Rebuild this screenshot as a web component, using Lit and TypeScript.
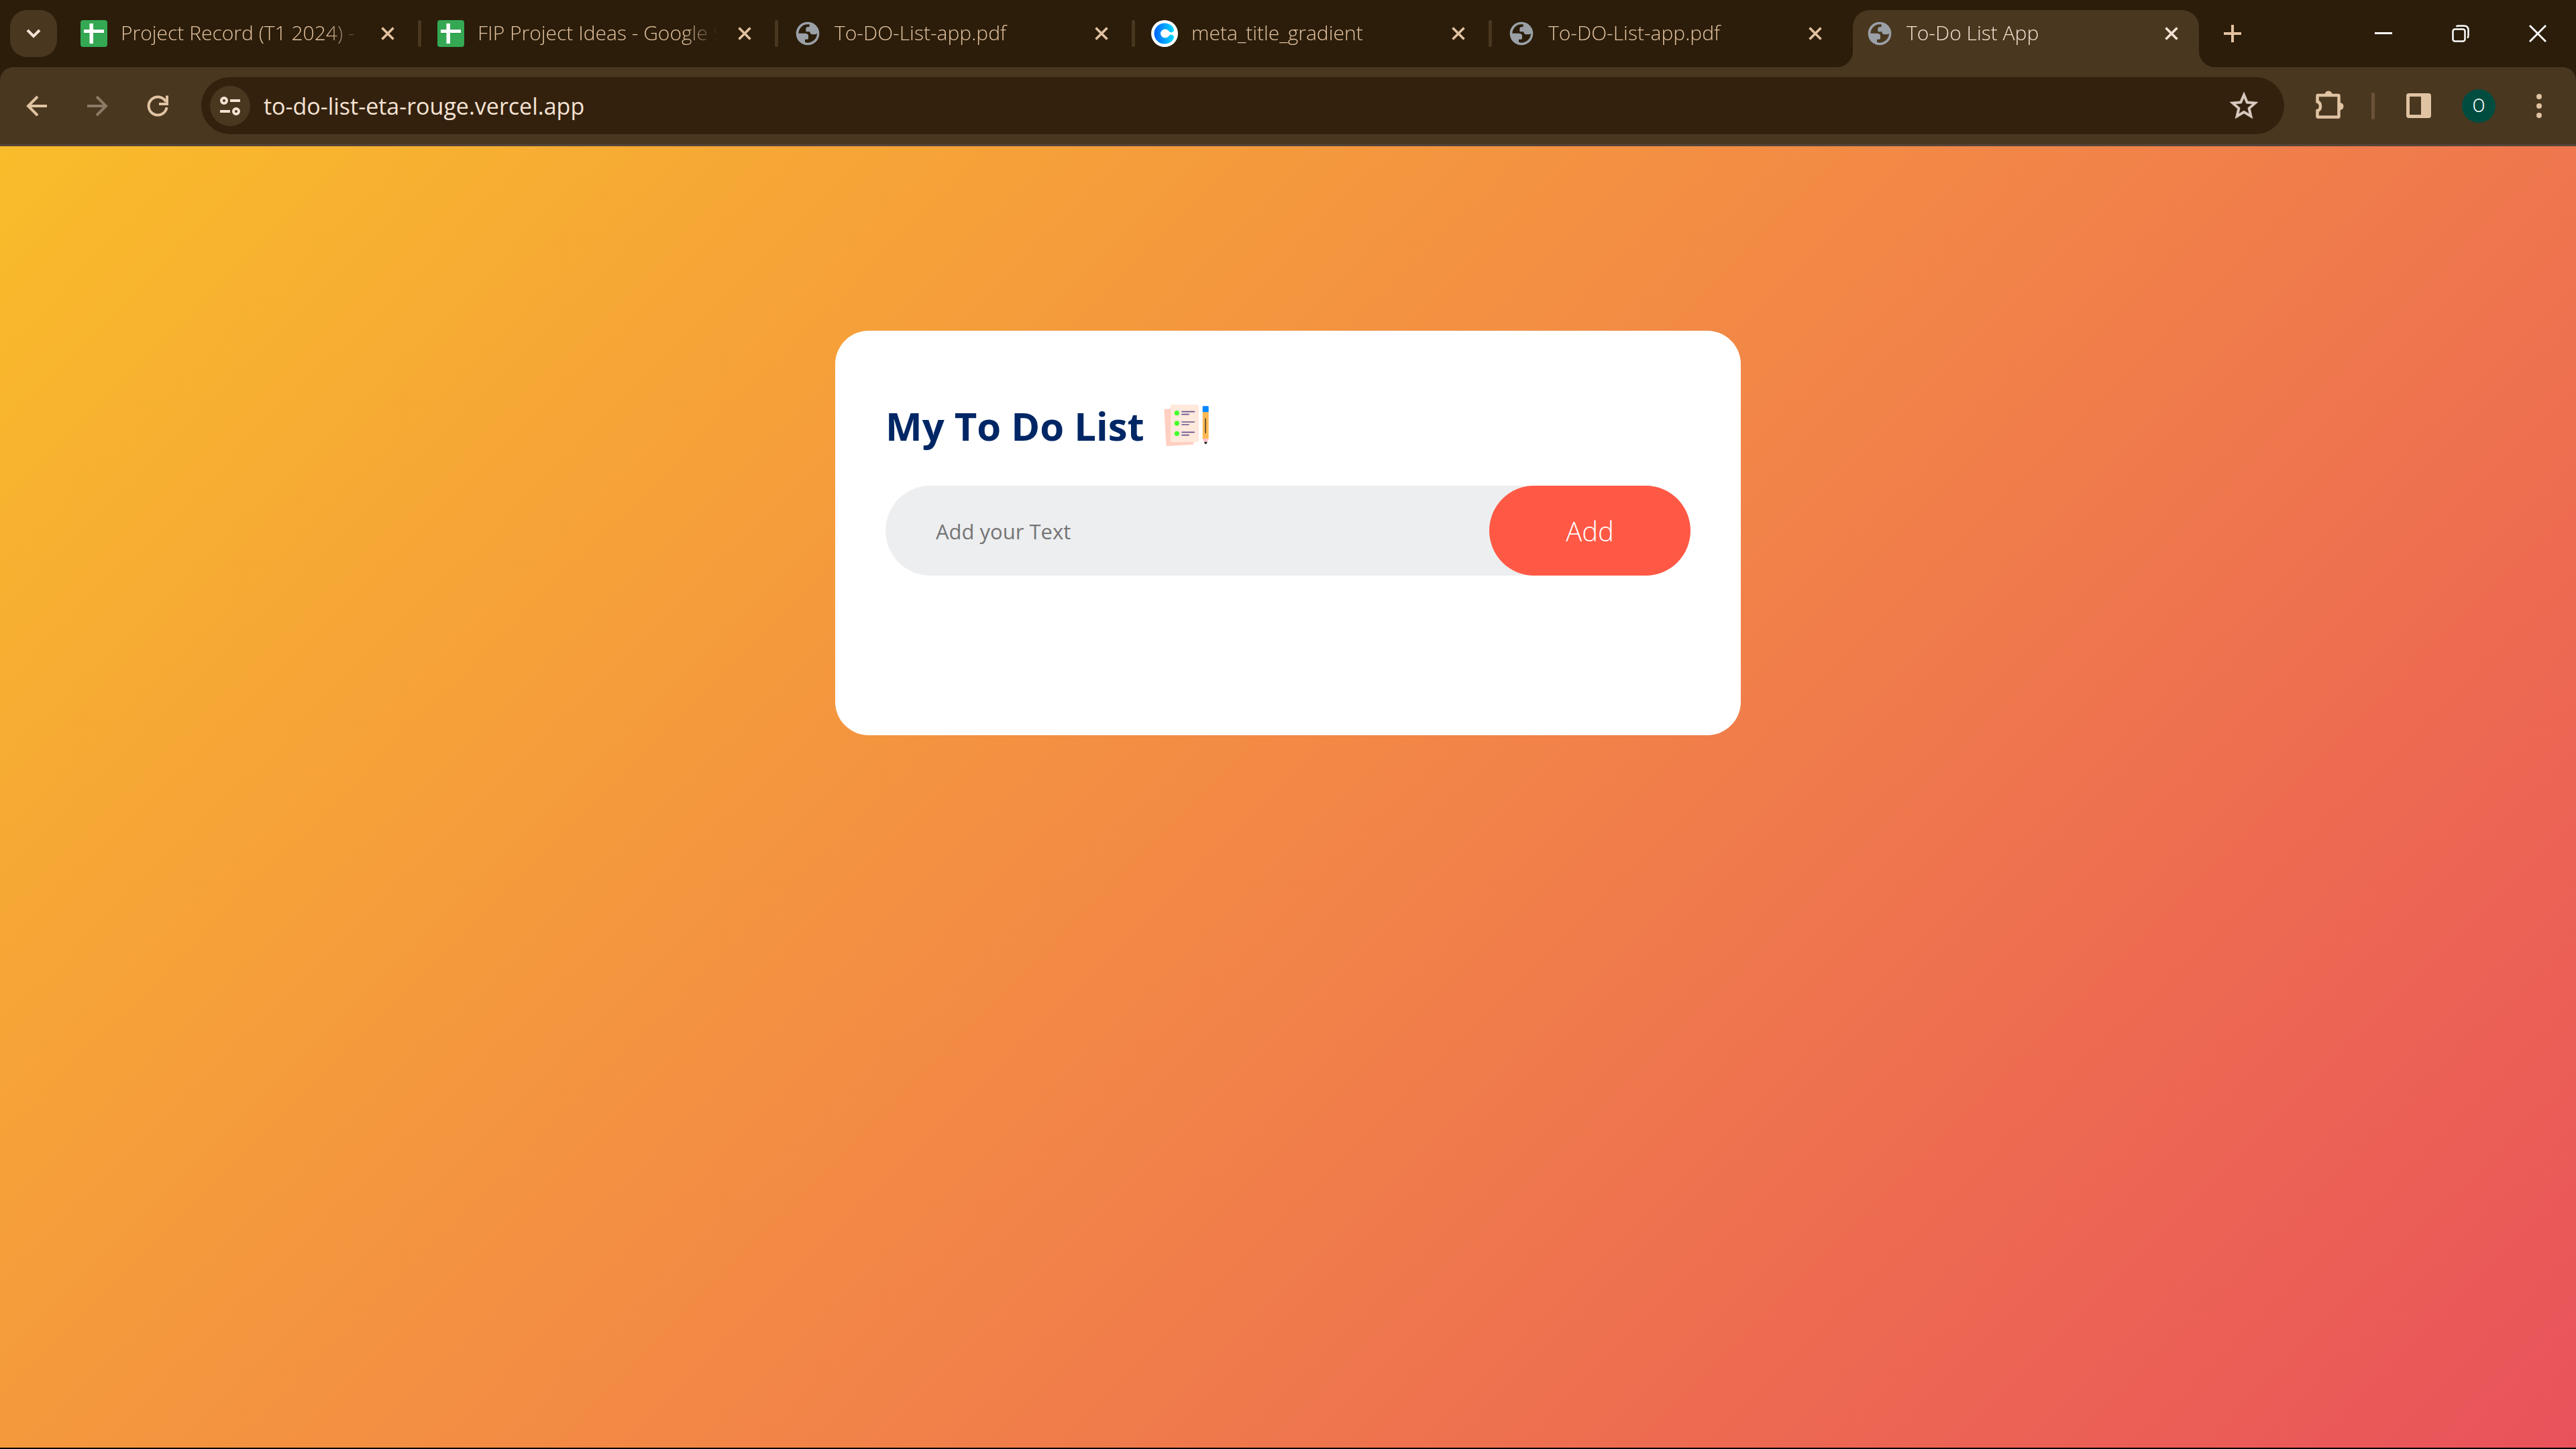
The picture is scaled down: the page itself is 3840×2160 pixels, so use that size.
import { LitElement, html, css, svg, nothing, type TemplateResult } from "lit";
import { customElement, property, state } from "lit/decorators.js";

const sheetIcon = svg`
  <svg viewBox="0 0 40 40" width="40" height="40" aria-hidden="true">
    <rect width="40" height="40" rx="4" fill="#34a853" />
    <path d="M5 13h30v7H5z" fill="#188038" opacity=".35" />
    <path d="M13.5 5h5.5v9h16v5H19v16h-5.5V19H5v-5h8.5z" fill="#fff" />
  </svg>`;

const globeIcon = svg`
  <svg viewBox="0 0 40 40" width="40" height="40" aria-hidden="true">
    <g transform="translate(-15 -15) scale(.3333)">
      <path fill="#9aa0a6" fill-rule="evenodd" d="M105 53a52 52 0 1 0 0 104a52 52 0 1 0 0-104z
        M113 64A42 42 0 0 0 64 104H92Q108 105 108 114V127Q108 131 104 131H93V143
        Q99 146 107 146A42 42 0 0 0 147 104Q143 109 136 109H128Q115 109 115 97H100Q97 97 97 94V83Q97 76 104 76H108Q113 76 113 71Z" />
    </g>
  </svg>`;

const canvaIcon = svg`
  <svg viewBox="0 0 40 40" width="40" height="40" aria-hidden="true">
    <defs>
      <linearGradient id="c-fill" x1="0" x2="1" y1="0" y2="0">
        <stop offset="0" stop-color="#0061ff" />
        <stop offset="1" stop-color="#00dcff" />
      </linearGradient>
    </defs>
    <circle cx="20" cy="20" r="20" fill="#fff" />
    <path fill="url(#c-fill)" d="M20 4.500C27 4.500 33 9 34 14C34.600 17.500 30 19.500 27.500 17.500C26 15.500 24 13.500 20.500 13.500A6.500 6.500 0 0 0 20.500 26.500C24 26.500 26 24.500 27.500 22.500C30 20.500 34.600 22.500 34 26C33 31 27 35.500 20 35.500A15.500 15.500 0 0 1 20 4.500Z" />
  </svg>`;

const closeIcon = svg`
  <svg viewBox="0 0 20 20" width="20" height="20" aria-hidden="true">
    <path d="M1.500 1.500l17 17M18.500 1.500l-17 17" stroke="currentColor" stroke-width="3.600" />
  </svg>`;

interface TabInfo {
  title: string;
  icon: TemplateResult | unknown;
  active?: boolean;
}

const TABS: TabInfo[] = [
  { title: "Project Record (T1 2024) - G", icon: sheetIcon },
  { title: "FIP Project Ideas - Google S", icon: sheetIcon },
  { title: "To-DO-List-app.pdf", icon: globeIcon },
  { title: "meta_title_gradient", icon: canvaIcon },
  { title: "To-DO-List-app.pdf", icon: globeIcon },
  { title: "To-Do List App", icon: globeIcon, active: true },
];

const resetButton = css`
  button {
    display: flex;
    align-items: center;
    justify-content: center;
    flex: none;
    margin: 0;
    padding: 0;
    border: 0;
    background: none;
    color: inherit;
    font: inherit;
    cursor: pointer;
  }
  svg {
    display: block;
    flex: none;
  }
`;

@customElement("tab-strip")
class TabStrip extends LitElement {
  static styles = [
    resetButton,
    css`
      :host {
        display: block;
        background: #2b1d0a;
        color: #e3c2a0;
      }
      .strip {
        display: flex;
        align-items: center;
        height: 100px;
        padding-left: 15px;
      }
      .search {
        width: 70px;
        height: 70px;
        margin-right: 11px;
        border-radius: 25px;
        background: #493720;
        color: #f5e2d3;
      }
      .tabs {
        display: flex;
        flex: 0 1 auto;
        min-width: 0;
        align-self: stretch;
      }
      .tab {
        display: flex;
        align-items: center;
        flex: 0 1 auto;
        width: 532px;
        min-width: 0;
        box-sizing: border-box;
        padding-left: 24px;
        gap: 20px;
      }
      .title {
        flex: 1;
        min-width: 0;
        margin-bottom: 2px;
        overflow: hidden;
        white-space: nowrap;
        font-size: 30px;
        line-height: 40px;
        mask-image: linear-gradient(to left, transparent, #000 50px);
      }
      .close {
        width: 40px;
        height: 40px;
        border-radius: 20px;
      }
      .divider {
        flex: none;
        width: 5px;
        height: 40px;
        border-radius: 2px;
        margin-left: 5px;
        background: #493720;
      }
      .last .divider {
        visibility: hidden;
      }
      .active {
        position: relative;
        width: 516px;
        align-self: flex-end;
        height: 85px;
        margin-left: 6px;
        padding: 0 21px 15px 20px;
        border-radius: 25px 25px 0 0;
        background: #493720;
        color: #f5e2d3;
      }
      .active::before,
      .active::after {
        content: "";
        position: absolute;
        bottom: 0;
        width: 25px;
        height: 25px;
      }
      .active::before {
        right: 100%;
        background: radial-gradient(circle at 0 0, transparent 25px, #493720 26px);
      }
      .active::after {
        left: 100%;
        background: radial-gradient(circle at 100% 0, transparent 25px, #493720 26px);
      }
      .new {
        width: 70px;
        height: 70px;
        margin-left: 15px;
      }
      .window {
        display: flex;
        align-self: stretch;
        margin-left: auto;
        color: #fff;
      }
      .window button {
        width: 115px;
      }
    `,
  ];

  render() {
    return html`
      <div class="strip">
        <button class="search" aria-label="Search tabs">
          <svg viewBox="0 0 22 14" width="22" height="14" aria-hidden="true">
            <path d="M2 2l9 9 9-9" fill="none" stroke="currentColor" stroke-width="4" />
          </svg>
        </button>
        <div class="tabs" role="tablist">
          ${TABS.map(
            (t, i) => html`
              <div
                class="tab ${t.active ? "active" : ""} ${TABS[i + 1]?.active ? "last" : ""}"
                role="tab"
                aria-selected=${t.active ? "true" : "false"}
              >
                ${t.icon}
                <span class="title">${t.title}</span>
                <button class="close" aria-label="Close tab">${closeIcon}</button>
                ${t.active ? nothing : html`<span class="divider"></span>`}
              </div>
            `
          )}
        </div>
        <button class="new" aria-label="New tab">
          <svg viewBox="0 0 26 26" width="26" height="26" aria-hidden="true">
            <path d="M13 0v26M0 13h26" stroke="currentColor" stroke-width="4" />
          </svg>
        </button>
        <div class="window">
          <button aria-label="Minimize">
            <svg viewBox="0 0 26 26" width="26" height="26" aria-hidden="true">
              <path d="M0 12.500h26" stroke="currentColor" stroke-width="3" />
            </svg>
          </button>
          <button aria-label="Restore">
            <svg viewBox="0 0 26 26" width="26" height="26" fill="none" stroke="currentColor" stroke-width="2.500" aria-hidden="true">
              <rect x="1.500" y="6.500" width="18" height="18" rx="3" />
              <path d="M6.500 2.500Q7.500 1.500 10 1.500H18Q24.500 1.500 24.500 8V16Q24.500 18.500 23 19.500" />
            </svg>
          </button>
          <button aria-label="Close window">
            <svg viewBox="0 0 26 26" width="26" height="26" aria-hidden="true">
              <path d="M1 1l24 24M25 1L1 25" stroke="currentColor" stroke-width="2.800" />
            </svg>
          </button>
        </div>
      </div>
    `;
  }
}

@customElement("nav-bar")
class NavBar extends LitElement {
  static styles = [
    resetButton,
    css`
      :host {
        display: block;
        background: #2b1d0a;
        color: #e0c3a2;
      }
      .bar {
        display: flex;
        align-items: center;
        box-sizing: border-box;
        height: 118px;
        padding: 0 10px;
        border-bottom: 3px solid #54443a;
        border-radius: 20px 20px 0 0;
        background: #493720;
      }
      .tool {
        width: 90px;
        height: 85px;
      }
      .dim {
        color: #8d7965;
      }
      .address {
        display: flex;
        align-items: center;
        flex: 1;
        min-width: 0;
        height: 85px;
        margin: 0 23px 0 20px;
        padding: 0 35px 0 13px;
        box-sizing: border-box;
        border-radius: 43px;
        background: #33210e;
        color: #f5e2d3;
      }
      .site {
        width: 60px;
        height: 60px;
        border-radius: 30px;
        background: #493720;
      }
      .url {
        flex: 1;
        min-width: 0;
        margin: 0;
        padding: 0 20px;
        border: 0;
        outline: 0;
        background: none;
        color: inherit;
        font-family: inherit;
        font-weight: 400;
        font-size: 34px;
        line-height: 50px;
      }
      .star {
        color: #d8cabf;
      }
      .rule {
        flex: none;
        width: 5px;
        height: 40px;
        margin: 0 20px 0 17px;
        border-radius: 2px;
        background: #6b5138;
      }
      .avatar {
        display: flex;
        align-items: center;
        justify-content: center;
        width: 50px;
        height: 50px;
        border-radius: 25px;
        background: #004d40;
        color: #fff;
        font-family: Roboto, sans-serif;
        font-weight: 300;
        font-size: 28px;
        line-height: 50px;
      }
    `,
  ];

  render() {
    return html`
      <div class="bar">
        <button class="tool" aria-label="Back">
          <svg viewBox="0 0 32 32" width="32" height="32" fill="none" stroke="currentColor" stroke-width="4" aria-hidden="true">
            <path d="M31 16H4M17 2L3 16l14 14" />
          </svg>
        </button>
        <button class="tool dim" aria-label="Forward">
          <svg viewBox="0 0 32 32" width="32" height="32" fill="none" stroke="currentColor" stroke-width="4" aria-hidden="true">
            <path d="M1 16h27M15 2l14 14-14 14" />
          </svg>
        </button>
        <button class="tool" aria-label="Reload">
          <svg viewBox="0 0 32 32" width="32" height="32" fill="none" stroke="currentColor" stroke-width="4" aria-hidden="true">
            <path d="M29.500 18A13.500 13.500 0 1 1 28 9.500" />
            <path d="M30 0.500V13H18" />
          </svg>
        </button>
        <div class="address">
          <button class="site" aria-label="View site information">
            <svg viewBox="0 0 30 30" width="30" height="30" fill="none" stroke="currentColor" stroke-width="4" aria-hidden="true">
              <circle cx="6" cy="7" r="4" />
              <path d="M15 7h15M0 23h15" />
              <circle cx="24" cy="23" r="4" />
            </svg>
          </button>
          <input class="url" type="text" aria-label="Address" .value=${"to-do-list-eta-rouge.vercel.app"} />
          <button class="star" aria-label="Bookmark this tab">
            <svg viewBox="0 0 24 24" width="50" height="50" fill="currentColor" stroke="currentColor" stroke-width=".3" aria-hidden="true">
              <path d="M22 9.240l-7.190-.62L12 2 9.190 8.630 2 9.240l5.460 4.730L5.820 21 12 17.270 18.180 21l-1.630-7.030L22 9.240zM12 15.400l-3.760 2.270 1-4.280-3.320-2.880 4.380-.38L12 6.100l1.710 4.040 4.380.38-3.320 2.880 1 4.280L12 15.400z" />
            </svg>
          </button>
        </div>
        <button class="tool" aria-label="Extensions">
          <svg viewBox="0 0 50 50" width="50" height="50" aria-hidden="true">
            <path
              d="M9 9H37.500Q38.500 9 38.500 10V40.500Q38.500 41.500 37.500 41.500H7.500Q6.500 41.500 6.500 40.500V32Q11 31 11 25.500T6.500 18.500V10Q6.500 9 7.500 9Z"
              fill="none" stroke="currentColor" stroke-width="4.500"
            />
            <path d="M17.500 8a5.500 5.500 0 0 1 11 0zM40 20a5.500 5.500 0 0 1 0 11z" fill="currentColor" />
          </svg>
        </button>
        <span class="rule"></span>
        <button class="tool" aria-label="Side panel">
          <svg viewBox="0 0 37 37" width="37" height="37" aria-hidden="true">
            <path fill="currentColor" fill-rule="evenodd" d="M4 0H33Q37 0 37 4V33Q37 37 33 37H4Q0 37 0 33V4Q0 0 4 0ZM5 5V32H22V5Z" />
          </svg>
        </button>
        <button class="tool" aria-label="Profile"><span class="avatar">O</span></button>
        <button class="tool" aria-label="Menu">
          <svg viewBox="0 0 8 36" width="8" height="36" fill="currentColor" aria-hidden="true">
            <circle cx="4" cy="4" r="4" />
            <circle cx="4" cy="18" r="4" />
            <circle cx="4" cy="32" r="4" />
          </svg>
        </button>
      </div>
    `;
  }
}

@customElement("todo-card")
class TodoCard extends LitElement {
  @property({ attribute: false }) heading = "My To Do List";
  @state() private items: string[] = [];

  static styles = [
    resetButton,
    css`
      :host {
        display: block;
        width: 100%;
        max-width: 1350px;
      }
      .card {
        box-sizing: border-box;
        padding: 100px 75px 175px;
        border-radius: 50px;
        background: #fff;
      }
      .head {
        display: flex;
        align-items: center;
        gap: 25px;
        margin: 0 0 47px;
        color: #002765;
        font-weight: 700;
        font-size: 58px;
        line-height: 84px;
      }
      .row {
        display: flex;
        align-items: stretch;
        min-height: 134px;
        margin-bottom: 63px;
        border-radius: 75px;
        background: #edeef0;
      }
      .text {
        flex: 1;
        min-width: 0;
        margin: 0;
        padding: 2px 25px 0 75px;
        border: 0;
        outline: 0;
        background: none;
        color: #333;
        font: inherit;
        font-size: 31px;
        font-weight: 400;
      }
      .text::placeholder {
        color: #757575;
        opacity: 1;
      }
      .row .add {
        width: 300px;
        border-radius: 100px;
        background: #ff5945;
        color: #fff;
        font-size: 40px;
      }
      .list {
        margin: 0;
        padding: 0;
        list-style: none;
        font-size: 42px;
        line-height: 75px;
      }
    `,
  ];

  private add(e: Event) {
    e.preventDefault();
    const box = this.renderRoot.querySelector("input")!;
    if (box.value.trim()) this.items = [...this.items, box.value.trim()];
    box.value = "";
  }

  render() {
    return html`
      <section class="card">
        <h1 class="head">
          ${this.heading}
          <svg viewBox="60 52 225 225" width="75" height="75" aria-hidden="true">
            <path d="M76 87L190 81Q196 81 196 87L206 240Q206 245 200 246L88 253Q82 253 82 247L73 92Q73 87 76 87Z" fill="#ffd0c2" />
            <rect x="102" y="67" width="126" height="168" rx="8" fill="#ffe8dc" />
            <g fill="#44ff2b">
              <circle cx="130" cy="105" r="11" />
              <circle cx="130" cy="151" r="11" />
              <circle cx="130" cy="197" r="11" />
            </g>
            <g stroke="#64548c" stroke-width="5" stroke-linecap="round">
              <path d="M153 99h55M153 111h30M153 145h55M153 157h30M153 191h55M153 204h30" />
            </g>
            <path d="M245 100h27v120h-27z" fill="#ffb954" />
            <path d="M249 74h19q4 0 4 4v23h-27V78q0-4 4-4z" fill="#0087ff" />
            <path d="M258 130v64" stroke="#54452f" stroke-width="5" stroke-linecap="round" />
            <path d="M245 219h27l-7 16h-13z" fill="#ffc0cb" />
            <path d="M252 234h14l-2 7-5 4-5-4z" fill="#2b2b2b" />
          </svg>
        </h1>
        <form class="row" @submit=${this.add}>
          <input class="text" type="text" placeholder="Add your Text" aria-label="Add your Text" />
          <button class="add" type="submit">Add</button>
        </form>
        <ul class="list">
          ${this.items.map((i) => html`<li>${i}</li>`)}
        </ul>
      </section>
    `;
  }
}

@customElement("app-root")
class AppRoot extends LitElement {
  static styles = css`
    :host {
      display: flex;
      flex-direction: column;
      min-height: 100vh;
      font-family: "Open Sans", "Noto Sans", sans-serif;
      font-weight: 300;
    }
    .page {
      display: flex;
      flex: 1;
      align-items: flex-start;
      justify-content: center;
      padding: 275px 25px 50px;
      border-bottom: 2px solid #000;
      background: linear-gradient(135deg, #f9bc2a, #f28846 50%, #e9525b) padding-box;
    }
  `;

  render() {
    return html`
      <tab-strip></tab-strip>
      <nav-bar></nav-bar>
      <main class="page">
        <todo-card></todo-card>
      </main>
    `;
  }
}
